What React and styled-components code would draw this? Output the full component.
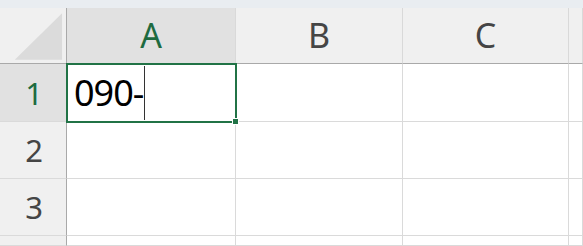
import styled, { createGlobalStyle } from "styled-components"

const GlobalStyle = createGlobalStyle`
    html, body {
        margin: 0;
        padding: 0;
        background: #ffffff;
        overflow: hidden;
    }
`

const COLS = ["A", "B", "C", "D"]
const ROWS = [1, 2, 3, 4]

const App = () => {
    return (
        <>
            <GlobalStyle />
            <Sheet>
                <TopStrip />
                <Grid>
                    <Corner>
                        <svg width="67" height="56" viewBox="0 0 67 56">
                            <polygon points="63,5 63,52 15,52" fill="#dbdbdb" />
                        </svg>
                    </Corner>
                    {COLS.map((c) => (
                        <ColHeader key={c} $active={c === "A"}>{c !== "D" ? c : ""}</ColHeader>
                    ))}

                    {ROWS.map((r) => (
                        <Row key={r} r={r} />
                    ))}
                </Grid>
            </Sheet>
        </>
    )
}

// row 4 only peeks in at the bottom edge, its label sits below the frame
const Row = ({ r }) => (
    <>
        <RowHeader $active={r === 1}>{r < 4 ? r : ""}</RowHeader>
        {COLS.map((c) => (
            <Cell key={c}>
                {r === 1 && c === "A" && (
                    <Selection>
                        <CellText>090-</CellText>
                        <Caret />
                        <FillHandle />
                    </Selection>
                )}
            </Cell>
        ))}
    </>
)

export default App

const Sheet = styled.div`
    width: 583px;
    height: 246px;
    overflow: hidden;
    display: flex;
    flex-direction: column;
    font-family: "Noto Sans", "Liberation Sans", sans-serif;
`

const TopStrip = styled.div`
    height: 8px;
    background: #e9edf1;
    flex-shrink: 0;
`

const Grid = styled.div`
    flex: 1;
    display: grid;
    grid-template-columns: 67px 169px 167px 166px 1fr;
    grid-template-rows: 56px 58px 57px 57px 1fr;
    box-sizing: border-box;
`

const Corner = styled.div`
    background: #f0f0f0;
    border-right: 1px solid #a9a9a9;
    border-bottom: 1px solid #a9a9a9;
    box-sizing: border-box;
    display: flex;

    svg {
        display: block;
    }
`

const ColHeader = styled.div`
    background: ${(p) => (p.$active ? "#e1e1e1" : "#f0f0f0")};
    color: ${(p) => (p.$active ? "#1e6b40" : "#454545")};
    border-right: 1px solid #d9d9d9;
    border-bottom: 1px solid #a9a9a9;
    box-sizing: border-box;
    display: flex;
    align-items: center;
    justify-content: center;
    font-size: 34px;
    padding-bottom: 2px;
`

const RowHeader = styled.div`
    background: ${(p) => (p.$active ? "#e1e1e1" : "#f0f0f0")};
    color: ${(p) => (p.$active ? "#1e6b40" : "#454545")};
    border-right: 1px solid #a9a9a9;
    border-bottom: 1px solid #dadada;
    box-sizing: border-box;
    display: flex;
    align-items: center;
    justify-content: center;
    font-size: 31px;
    padding-left: 2px;
`

const Cell = styled.div`
    position: relative;
    border-right: 1px solid #dadada;
    border-bottom: 1px solid #dadada;
    box-sizing: border-box;
    background: #ffffff;
`

const Selection = styled.div`
    position: absolute;
    left: -1px;
    top: -1px;
    right: -2px;
    bottom: -2px;
    border: 2px solid #217346;
    box-sizing: border-box;
    display: flex;
    align-items: center;
    padding-left: 6px;
    z-index: 2;
`

const CellText = styled.span`
    font-size: 36px;
    color: #000000;
    letter-spacing: -1px;
    line-height: 1;
`

const Caret = styled.span`
    width: 1px;
    height: 54px;
    background: #333333;
    margin-left: 1px;
`

const FillHandle = styled.div`
    position: absolute;
    right: -4px;
    bottom: -4px;
    width: 5px;
    height: 5px;
    background: #217346;
    border: 1px solid #ffffff;
`
